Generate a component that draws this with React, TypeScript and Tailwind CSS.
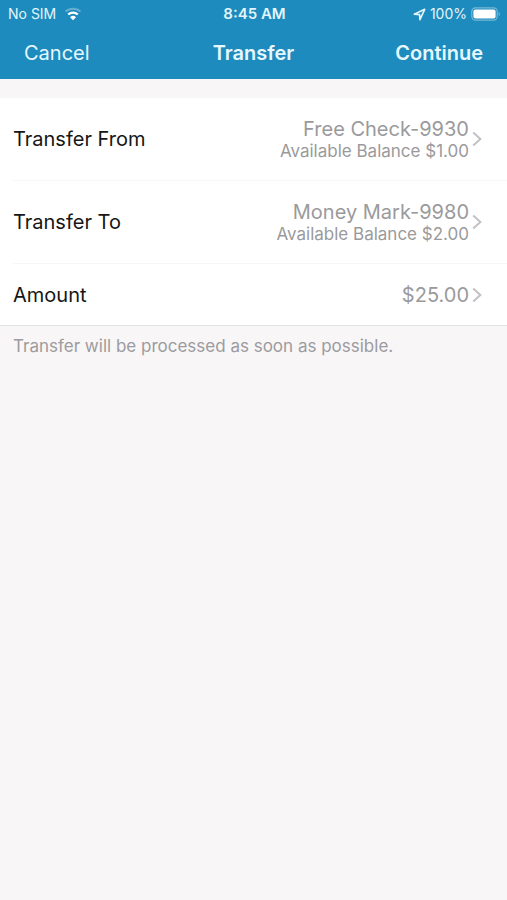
type Account = { name: string; balance: string };

type Row = { label: string; account?: Account; value?: string };

const rows: Row[] = [
  { label: "Transfer From", account: { name: "Free Check-9930", balance: "$1.00" } },
  { label: "Transfer To", account: { name: "Money Mark-9980", balance: "$2.00" } },
  { label: "Amount", value: "$25.00" },
];

function WifiIcon() {
  return (
    <svg width="18" height="14" viewBox="0 0 18 14" fill="none" aria-hidden="true">
      <path d="M1.5 4.6a11 11 0 0 1 15 0" stroke="#fff" strokeOpacity="0.3" strokeWidth="2" />
      <path d="M4.2 7.5a7 7 0 0 1 9.6 0" stroke="#fff" strokeWidth="2.2" />
      <path d="M9 13.2 6 10.2a4.4 4.4 0 0 1 6 0Z" fill="#fff" />
    </svg>
  );
}

function LocationIcon() {
  return (
    <svg width="13" height="13" viewBox="0 0 12 12" fill="none" aria-hidden="true">
      <path d="M1.2 5.7 10.8 1.2 6.4 10.8 6.1 6.1Z" stroke="#e2f5fc" strokeWidth="1.5" strokeLinejoin="round" />
    </svg>
  );
}

function BatteryIcon() {
  return (
    <svg width="30" height="14" viewBox="0 0 30 14" fill="none" aria-hidden="true">
      <rect x="0.8" y="0.8" width="25.4" height="12.4" rx="3.6" stroke="#fff" strokeOpacity="0.4" strokeWidth="1.2" />
      <rect x="2.4" y="2.4" width="22.2" height="9.2" rx="2" fill="#fff" />
      <path d="M27.7 5v4c1.7-.8 1.7-3.2 0-4Z" fill="#fff" fillOpacity="0.4" />
    </svg>
  );
}

function Chevron() {
  return (
    <svg width="10" height="16" viewBox="0 0 10 16" fill="none" className="shrink-0" aria-hidden="true">
      <path d="M1.2 1.4 8.4 8 1.2 14.6" stroke="#c2c2c4" strokeWidth="2" />
    </svg>
  );
}

function StatusBar() {
  return (
    <div className="grid h-7 grid-cols-3 items-center pr-1.5 pl-2 text-[14px] leading-5 text-[#e2f5fc]">
      <div className="flex items-center gap-2">
        <span>No SIM</span>
        <WifiIcon />
      </div>
      <div className="text-center text-[15px] font-semibold">8:45 AM</div>
      <div className="flex items-center justify-end gap-1">
        <LocationIcon />
        <span>100%</span>
        <BatteryIcon />
      </div>
    </div>
  );
}

export default function App() {
  return (
    <div className="min-h-screen bg-[#f8f6f7] font-['Inter','Liberation_Sans',sans-serif]">
      <header className="bg-[#1d8bbd]">
        <StatusBar />
        <nav className="grid grid-cols-3 items-center px-6 py-2.5 text-[20px] leading-[31px] text-[#e6f8ff]">
          <button type="button" className="text-left">Cancel</button>
          <h1 className="text-center font-semibold">Transfer</h1>
          <button type="button" className="text-right font-semibold">Continue</button>
        </nav>
      </header>
      <main className="pt-[19px]">
        <div className="border-b border-[#e2e1e3] bg-white">
          {rows.map((row) => (
            <div key={row.label} className="group">
              <button
                type="button"
                className="flex w-full items-center justify-between pr-[25px] pl-[13px] text-left"
              >
                <span className="text-[20px] leading-6 text-[#161616]">{row.label}</span>
                {row.account ? (
                  <span className="flex h-[82px] items-center gap-[3px] text-right text-[#9a9a9c]">
                    <span className="flex flex-col">
                      <span className="text-[20px] leading-6">{row.account.name}</span>
                      <span className="text-[17px] leading-5">Available Balance {row.account.balance}</span>
                    </span>
                    <Chevron />
                  </span>
                ) : (
                  <span className="flex h-[61px] items-center gap-[3px] text-[20px] text-[#9a9a9c]">
                    {row.value}
                    <Chevron />
                  </span>
                )}
              </button>
              <div className="ml-[13px] h-px bg-[#f6f6f7] group-last:hidden" />
            </div>
          ))}
        </div>
        <p className="px-[13px] pt-2 text-[17px] leading-6 text-[#9c9b9e]">
          Transfer will be processed as soon as possible.
        </p>
      </main>
    </div>
  );
}
